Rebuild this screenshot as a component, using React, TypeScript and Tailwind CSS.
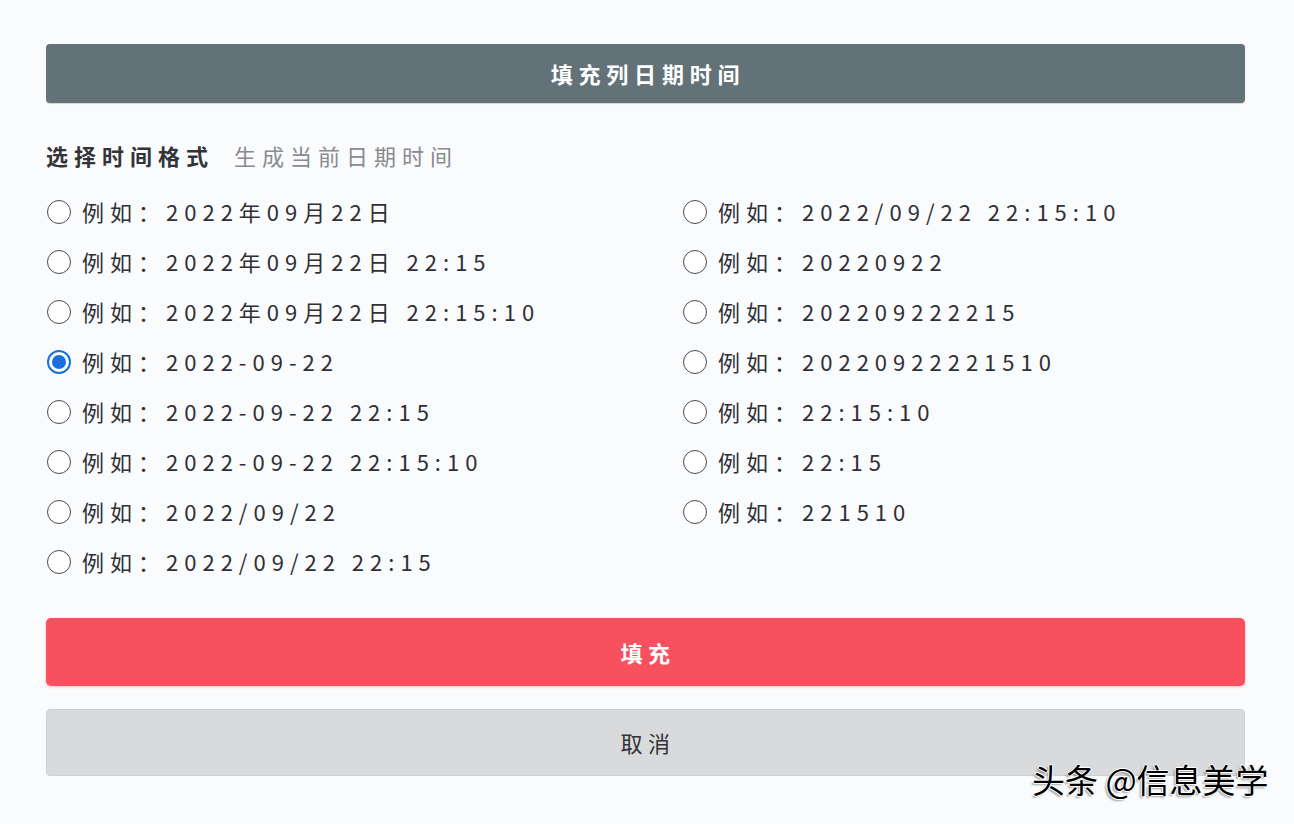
import React from "react";

const left = [
  "2022年09月22日",
  "2022年09月22日 22:15",
  "2022年09月22日 22:15:10",
  "2022-09-22",
  "2022-09-22 22:15",
  "2022-09-22 22:15:10",
  "2022/09/22",
  "2022/09/22 22:15",
];
const right = [
  "2022/09/22 22:15:10",
  "20220922",
  "202209222215",
  "20220922221510",
  "22:15:10",
  "22:15",
  "221510",
];

function Radio({ checked }: { checked?: boolean }) {
  if (checked) {
    return (
      <span className="flex h-[24px] w-[24px] shrink-0 items-center justify-center rounded-full border-[2px] border-[#1a6fe0] bg-white">
        <span className="h-[14px] w-[14px] rounded-full bg-[#1a6fe0]" />
      </span>
    );
  }
  return <span className="h-[24px] w-[24px] shrink-0 rounded-full border-[1.5px] border-[#4a4a4f] bg-white" />;
}

function Option({ text, checked }: { text: string; checked?: boolean }) {
  return (
    <div className="flex h-[50px] items-center pl-[1px]">
      <Radio checked={checked} />
      <span className="ml-[11px] -mt-[2px] whitespace-pre text-[22px] leading-none tracking-[6px] text-[#2f2f36]">
        例如：{text}
      </span>
    </div>
  );
}

export default function App() {
  return (
    <div
      className="relative h-[824px] w-[1294px] overflow-hidden bg-[#fafbfc]"
      style={{ fontFamily: '"Noto Sans CJK SC", "Noto Sans", sans-serif' }}
    >
      <div className="px-[46px] pt-[44px] pr-[49px]">
        <div className="flex h-[59px] items-center justify-center rounded-[4px] bg-[#637278] shadow-[0_1px_1px_rgba(0,0,0,0.15)]">
          <span className="pl-[5px] text-[22px] font-bold tracking-[5.8px] text-white">填充列日期时间</span>
        </div>

        <div className="mt-[37px] flex h-[30px] items-center">
          <span className="text-[22px] font-bold tracking-[6px] text-[#33333a]">选择时间格式</span>
          <span className="ml-[20px] text-[22px] tracking-[6px] text-[#8a8a90]">生成当前日期时间</span>
        </div>

        <div className="mt-[17px] grid grid-cols-[636px_1fr]">
          <div className="flex flex-col">
            {left.map((t, i) => (
              <Option key={t} text={t} checked={i === 3} />
            ))}
          </div>
          <div className="flex flex-col">
            {right.map((t) => (
              <Option key={t} text={t} />
            ))}
          </div>
        </div>

        <button className="mt-[31px] flex h-[68px] w-full items-center justify-center rounded-[5px] bg-[#f9505f] shadow-[0_1px_3px_rgba(249,80,95,0.35)]">
          <span className="pl-[5px] text-[22px] font-bold tracking-[5.5px] text-white">填充</span>
        </button>

        <button className="mt-[23px] flex h-[67px] w-full items-center justify-center rounded-[4px] border border-[#cfd0d2] bg-[#d9dadc]">
          <span className="pl-[5px] text-[22px] tracking-[5.5px] text-[#333338]">取消</span>
        </button>
      </div>

      <div className="absolute left-[1032px] top-[763px] whitespace-pre text-[33px] leading-none text-black [text-shadow:-1px_0_0_#fff,1px_0_0_#fff,0_1px_0_#fff,0_-1px_0_#fff,-2px_2px_2px_rgba(0,0,0,0.35)]">
        头条 @信息美学
      </div>
    </div>
  );
}
